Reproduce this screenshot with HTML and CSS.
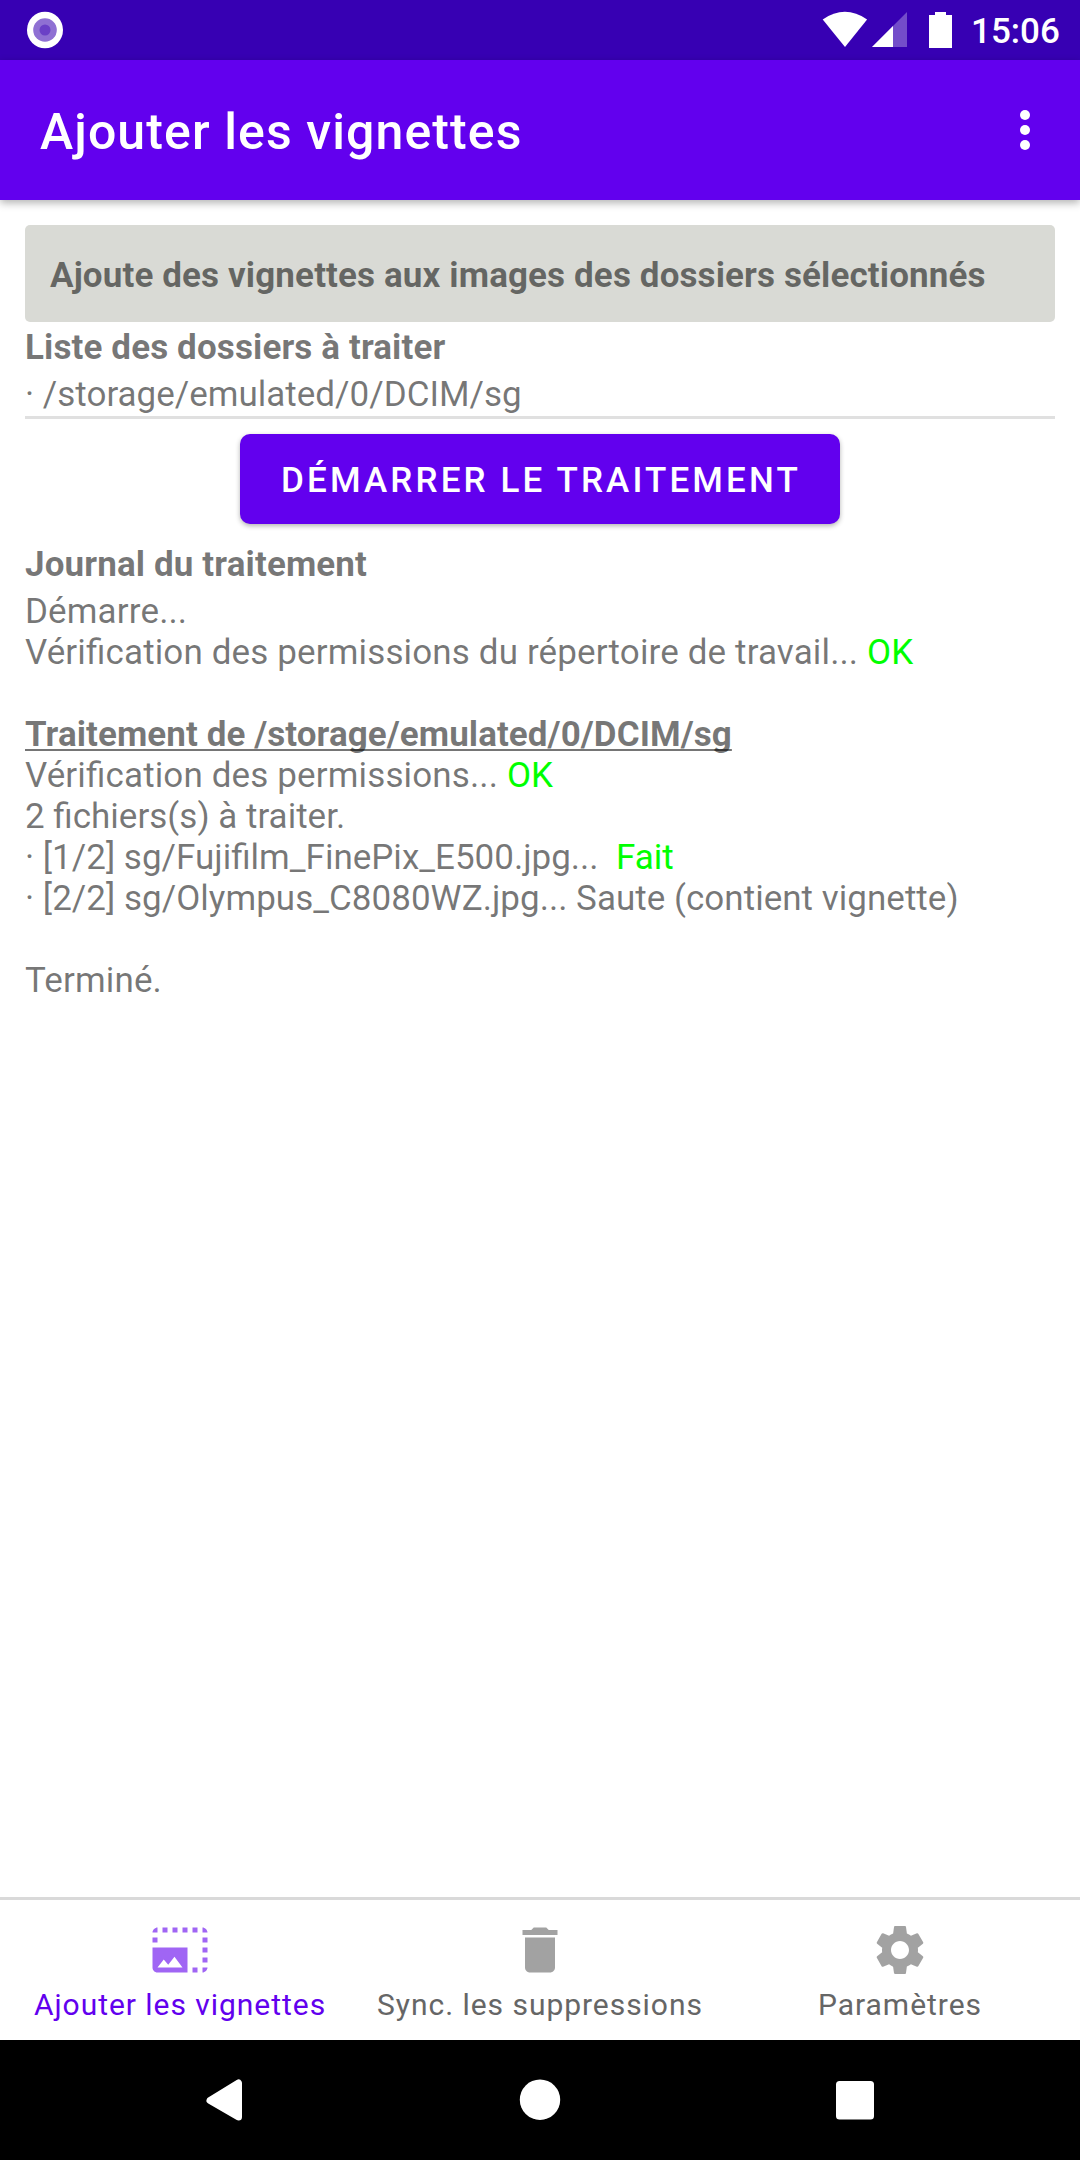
FILE: index.html
```html
<!DOCTYPE html>
<html lang="fr">
<head>
<meta charset="utf-8">
<title>Ajouter les vignettes</title>
<link rel="stylesheet" href="styles.css">
</head>
<body>
<div class="screen">
  <div class="status-bar">
    <svg class="status-notification" width="36" height="38" viewBox="0 0 36 38">
      <ellipse cx="18" cy="19" rx="18" ry="18.3" fill="#fff"/>
      <circle cx="18" cy="19" r="11.8" fill="#8f70d3"/>
      <circle cx="18" cy="19" r="5.5" fill="#6a40c6"/>
    </svg>
    <svg class="status-icons" width="130" height="40" viewBox="0 0 130 40">
      <path d="M0.7 9.5Q22.9-5.8 45.1 9.5L23 37Z" fill="#fff"/>
      <path d="M50 37L85 2V37Z" fill="#fff" fill-opacity=".3"/>
      <path d="M50 37L71 16V37Z" fill="#fff"/>
      <path d="M107 5H113V2H124V5H130V38H107Z" fill="#fff"/>
    </svg>
    <span class="clock">15:06</span>
  </div>

  <header class="app-bar">
    <h1 class="app-title">Ajouter les vignettes</h1>
    <svg class="overflow" width="10" height="40" viewBox="0 0 10 40" fill="#fff">
      <circle cx="5" cy="5" r="5"/><circle cx="5" cy="20" r="5"/><circle cx="5" cy="35" r="5"/>
    </svg>
  </header>

  <main class="content">
    <div class="banner"><p class="text heading">Ajoute des vignettes aux images des dossiers sélectionnés</p></div>
    <h2 class="text heading">Liste des dossiers à traiter</h2>
    <p class="text folders">· /storage/emulated/0/DCIM/sg</p>
    <button class="start">DÉMARRER LE TRAITEMENT</button>
    <h2 class="text heading">Journal du traitement</h2>
    <div class="text log"><span class="message">Démarre...</span><br>
      <span class="message">Vérification des permissions du répertoire de travail... <span class="ok">OK</span></span><br>
      <br>
      <b class="log-title">Traitement de /storage/emulated/0/DCIM/sg</b><br>
      <span class="message">Vérification des permissions... <span class="ok">OK</span></span><br>
      2 fichiers(s) à traiter.<br>
      · [1/2] sg/Fujifilm_FinePix_E500.jpg...&nbsp; <span class="ok">Fait</span><br>
      <span class="skipped">· [2/2] sg/Olympus_C8080WZ.jpg... Saute (contient vignette)</span><br>
      <br>
      <span class="message">Terminé.</span>
    </div>
  </main>

  <nav class="tabs">
    <a class="tab tab-active">
      <svg class="tab-icon" viewBox="0 0 24 24"><path d="M21 15h2v2h-2v-2zm0-4h2v2h-2v-2zm2 8h-2v2c1 0 2-1 2-2zM13 3h2v2h-2V3zm8 4h2v2h-2V7zm0-4v2h2c0-1-1-2-2-2zM1 7h2v2H1V7zm16-4h2v2h-2V3zm0 16h2v2h-2v-2zM3 3C2 3 1 4 1 5h2V3zm6 0h2v2H9V3zM5 3h2v2H5V3zm-4 8v8c0 1.100.9 2 2 2h12V11H1zm2 8l2.500-3.210 1.790 2.150 2.500-3.220L13 19H3z"/></svg>
      <span class="tab-label">Ajouter les vignettes</span>
    </a>
    <a class="tab">
      <svg class="tab-icon" viewBox="0 0 24 24"><path d="M6 19c0 1.100.9 2 2 2h8c1.100 0 2-.9 2-2V7H6v12zM19 4h-3.500l-1-1h-5l-1 1H5v2h14V4z"/></svg>
      <span class="tab-label">Sync. les suppressions</span>
    </a>
    <a class="tab">
      <svg class="tab-icon" viewBox="0 0 24 24"><path d="M19.140 12.940c.040-.300.060-.610.060-.940 0-.320-.020-.640-.070-.940l2.030-1.580c.180-.140.230-.410.120-.610l-1.920-3.320c-.120-.220-.370-.290-.590-.220l-2.390.960c-.500-.380-1.030-.700-1.620-.940L14.400 2.810c-.040-.240-.240-.410-.480-.410h-3.840c-.240 0-.430.170-.470.410L9.250 5.350c-.590.240-1.130.570-1.620.940L5.240 5.330c-.220-.080-.470 0-.590.220L2.740 8.870c-.120.210-.080.470.120.610l2.030 1.580c-.050.300-.090.630-.090.940s.020.640.070.940l-2.030 1.580c-.180.140-.230.410-.120.610l1.920 3.320c.120.220.370.290.590.220l2.390-.960c.500.380 1.030.700 1.620.940l.360 2.540c.050.240.240.410.480.410h3.840c.240 0 .440-.170.470-.410l.360-2.540c.590-.240 1.130-.560 1.620-.940l2.390.960c.220.080.470 0 .590-.220l1.920-3.320c.120-.220.070-.470-.120-.610l-2.010-1.580zM12 15.600c-1.980 0-3.600-1.620-3.600-3.600s1.620-3.600 3.600-3.600 3.600 1.620 3.600 3.600-1.620 3.600-3.600 3.600z"/></svg>
      <span class="tab-label">Paramètres</span>
    </a>
  </nav>

  <div class="system-nav">
    <svg width="40" height="44" viewBox="0 0 40 44"><path d="M34.500 5V39L6 22.500Z" fill="#fff" stroke="#fff" stroke-width="7" stroke-linejoin="round"/></svg>
    <svg width="42" height="42" viewBox="0 0 42 42"><circle cx="21" cy="20.700" r="20.200" fill="#fff"/></svg>
    <svg width="40" height="40" viewBox="0 0 40 40"><rect x="1" y="1" width="38" height="38.500" rx="3.500" fill="#fff"/></svg>
  </div>
</div>
</body>
</html>
```
FILE: styles.css
```css
* { box-sizing: border-box; }

body {
  margin: 0;
  background: #fff;
  font-family: Roboto, sans-serif;
}

h1, h2, p { margin: 0; }

svg { display: block; flex: none; }

.screen {
  display: flex;
  flex-direction: column;
  width: 1080px;
  height: 2160px;
  overflow: hidden;
}

.status-bar {
  display: flex;
  align-items: center;
  height: 60px;
  flex: none;
  padding: 0 20px 0 27px;
  background: #3700b3;
  color: #fff;
}

.status-icons {
  margin-left: auto;
}

.clock {
  width: 89px;
  margin-left: 19px;
  padding-top: 2px;
  font-size: 35px;
  line-height: 41px;
  font-weight: 500;
}

.app-bar {
  display: flex;
  align-items: center;
  justify-content: space-between;
  height: 140px;
  flex: none;
  padding: 0 50px 0 40px;
  background: #6200ee;
  color: #fff;
  box-shadow: 0 3px 8px rgba(0, 0, 0, .3);
}

.app-title {
  padding-top: 3px;
  font-size: 50px;
  line-height: 58px;
  font-weight: 500;
  letter-spacing: 1.1px;
}

.content {
  display: flex;
  flex-direction: column;
  flex: 1;
  padding: 25px 25px 0;
  color: rgba(0, 0, 0, .54);
}

.banner {
  padding: 25px;
  border-radius: 5px;
  background: #d9dad5;
}

.text {
  padding: 5px 0 1px;
  font-size: 35px;
  line-height: 41px;
  white-space: nowrap;
}

.heading {
  font-weight: 700;
  letter-spacing: .12px;
}

.folders { border-bottom: 3px solid #e0e0e0; }

.start {
  align-self: center;
  width: 600px;
  height: 90px;
  margin: 15px 0;
  padding: 2px 0 0 2px;
  border: 0;
  border-radius: 10px;
  background: #6200ee;
  color: #fff;
  font: 500 35px/41px Roboto, sans-serif;
  letter-spacing: .0893em;
  box-shadow: 0 2px 5px rgba(0, 0, 0, .3);
}

.message {
  letter-spacing: .13px;
  font-feature-settings: "liga" 1;
}

.skipped { letter-spacing: .02px; }

.log-title {
  letter-spacing: .07px;
  text-decoration: underline;
  text-decoration-thickness: 2px;
  text-underline-offset: 3px;
  text-decoration-skip-ink: none;
}

.ok { color: #0f0; }

.tabs {
  display: grid;
  grid-template-columns: repeat(3, 1fr);
  height: 143px;
  flex: none;
  border-top: 3px solid #d9d9d9;
}

.tab {
  display: flex;
  flex-direction: column;
  align-items: center;
  padding-top: 20px;
  color: #666;
}

.tab-active { color: #6200ee; }

.tab-icon {
  width: 60px;
  height: 60px;
  fill: currentColor;
  opacity: .6;
}

.tab-label {
  margin-top: 7px;
  font-size: 30px;
  line-height: 35px;
  letter-spacing: .032em;
  white-space: nowrap;
}

.system-nav {
  display: flex;
  align-items: center;
  justify-content: space-between;
  height: 120px;
  flex: none;
  padding: 0 205px 0 204px;
  background: #000;
}
```
